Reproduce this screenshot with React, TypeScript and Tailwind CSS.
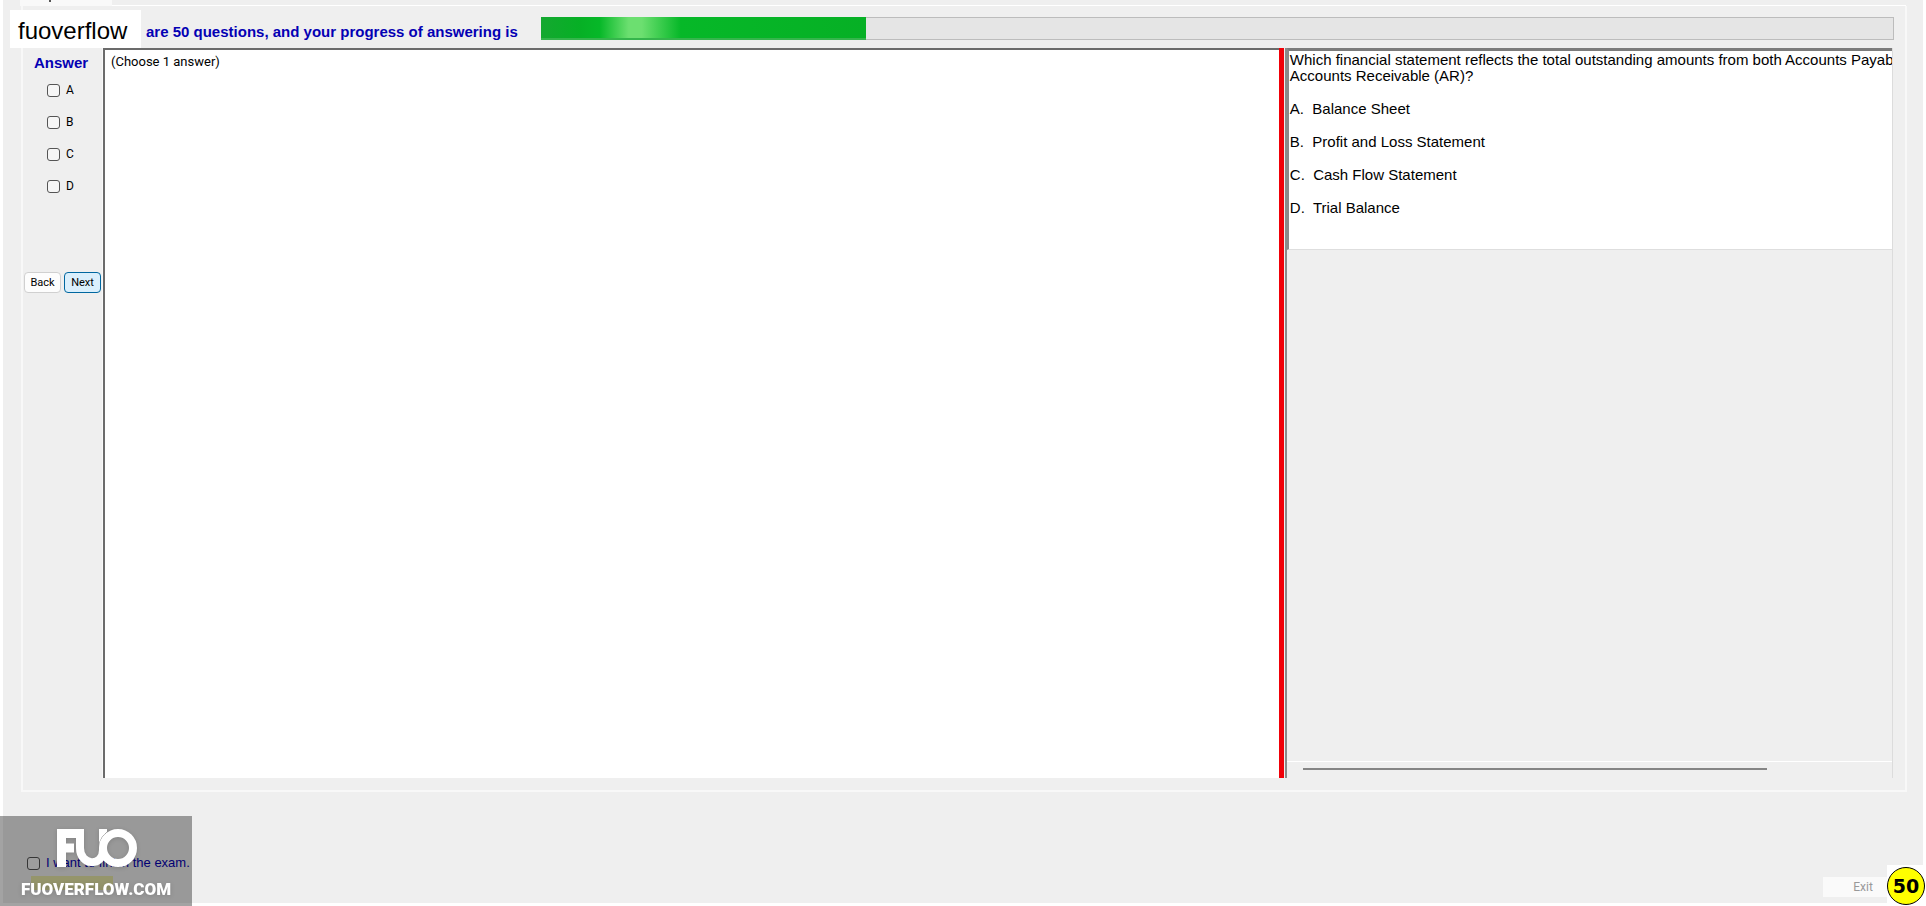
const answers = ['A', 'B', 'C', 'D'];

const choices = [
    { key: 'A', text: 'A.  Balance Sheet' },
    { key: 'B', text: 'B.  Profit and Loss Statement' },
    { key: 'C', text: 'C.  Cash Flow Statement' },
    { key: 'D', text: 'D.  Trial Balance' },
];

const checkboxClass = 'h-[13px] w-[13px] shrink-0 appearance-none rounded-[3px] border border-[#555] bg-[#f6f6f6] checked:bg-[#0067c0]';

const Watermark = () => (
    <div className="pointer-events-none absolute bottom-0 left-0 flex h-[90px] w-48 flex-col items-center bg-black/36 pt-3">
        <svg className="h-10 w-[84px] drop-shadow-sm" viewBox="0 0 84 40" fill="none" stroke="white" aria-hidden="true">
            <path d="M7.500 39V5.500H22M7 20H20" strokeWidth="9" />
            <path d="M26 1V20C26 38 49 39 49 22V1" strokeWidth="8" />
            <path d="M45 20A19.500 19.500 0 0 1 58 1.500" stroke="#8a8a8a" strokeWidth="1" />
            <circle cx="64" cy="20" r="15" strokeWidth="8" />
        </svg>
        <span className="mt-[11px] text-[17px] font-black leading-5 text-white drop-shadow-sm">FUOVERFLOW.COM</span>
    </div>
);

const App = () => {
    return (
        <div className="relative overflow-hidden font-['Roboto','Liberation_Sans',sans-serif] text-black">
            <div className="flex min-h-screen flex-col border-x-[3px] border-b-[3px] border-white bg-[#efefef]">

                {/* Tab strip */}
                <div className="flex h-[6px]">
                    <div className="ml-[17px] w-[92px] bg-[#f9f9f9] pl-[29px]">
                        <div className="h-[2px] w-[2px] bg-[#555]" />
                    </div>
                    <div className="mr-[17px] flex-1 border-b border-white" />
                </div>

                {/* Tab page */}
                <div className="ml-[18px] mr-4 flex flex-1 flex-col border-x-2 border-b-2 border-[#f8f8f8] pb-3">

                    {/* Progress header */}
                    <div className="flex h-[42px] shrink-0 items-start pl-[123px] pr-[11px] pt-[11px]">
                        <label id="progress-label" className="w-[395px] shrink-0 pt-[5px] font-['Liberation_Sans',sans-serif] text-[15px] font-bold leading-5 text-[#0400b4]">
                            are 50 questions, and your progress of answering is
                        </label>
                        <div
                            role="progressbar"
                            aria-labelledby="progress-label"
                            aria-valuenow={24}
                            className="h-[23px] flex-1 bg-[#e5e5e5] shadow-[inset_0_0_0_1px_#bcbcbc]"
                        >
                            <div className="h-full w-[24%] border-b-2 border-[#35b54c] bg-[linear-gradient(to_right,#14a830,#06b025_12%,#06b828_18%,#6cdf70_27%,#6cdf70_31%,#06b828_43%,#06b025)]" />
                        </div>
                    </div>

                    <div className="flex flex-1">
                        {/* Answer column */}
                        <aside className="flex w-20 shrink-0 flex-col border-r border-[#f8f8f8] pl-px">
                            <h2 className="mt-[5px] pl-[10px] font-['Liberation_Sans',sans-serif] text-[15px] font-bold leading-5 text-[#0400b4]">Answer</h2>
                            <div className="ml-[23px] mt-px flex flex-col">
                                {answers.map((letter) => (
                                    <label key={letter} className="flex h-8 items-center gap-[6px] text-xs">
                                        <input type="checkbox" name="answer" value={letter} className={checkboxClass} />
                                        {letter}
                                    </label>
                                ))}
                            </div>
                            <div className="mt-[70px] flex gap-[3px] text-[11px]">
                                <button className="h-[21px] w-[37px] rounded-[4px] border border-[#d0d0d0] bg-[#fdfdfd] pt-px">Back</button>
                                <button className="h-[21px] w-[37px] rounded-[4px] border border-[#0067a0] bg-[#daeffc] pt-px">Next</button>
                            </div>
                        </aside>

                        {/* Answer sheet */}
                        <main className="min-w-0 flex-[1171] border-l-2 border-t-2 border-[#6b6b6b] bg-white px-[6px] pt-[3px] text-[13px] leading-[18px]">
                            (Choose 1 answer)
                        </main>

                        {/* Question side, behind the splitter */}
                        <section className="mr-3 flex min-w-0 flex-[618] border-r border-[#dcdcdc]">
                            <div className="w-[5px] shrink-0 bg-[#f00008]" />
                            <div className="ml-px flex min-w-0 flex-1 flex-col border-l-2 border-[#8a8a8a]">
                                <div className="h-[202px] overflow-hidden border-b border-l-2 border-t-[3px] border-b-[#dedede] border-l-[#8a8a8a] border-t-[#7c7c7c] bg-white pl-px pt-px font-['Liberation_Sans',sans-serif] text-[15px] leading-4">
                                    <p className="whitespace-pre">
                                        {'Which financial statement reflects the total outstanding amounts from both Accounts Payable\nAccounts Receivable (AR)?'}
                                    </p>
                                    <ul className="mt-[17px] flex flex-col gap-[17px]">
                                        {choices.map((choice) => (
                                            <li key={choice.key} className="whitespace-pre">{choice.text}</li>
                                        ))}
                                    </ul>
                                </div>
                                <div className="mt-auto h-[17px] border-t border-white px-4 pt-[6px]">
                                    <div className="h-[2px] w-[81%] bg-[#858585]" />
                                </div>
                            </div>
                        </section>
                    </div>
                </div>

                {/* Footer */}
                <footer className="flex h-[111px] shrink-0 items-end justify-between pl-6">
                    <div className="pb-[13px]">
                        <label className="flex items-center gap-[6px] font-['Liberation_Sans',sans-serif] text-[13px] leading-5 text-[#0400b4]">
                            <input type="checkbox" name="finish" className={checkboxClass} />
                            I want to finish the exam.
                        </label>
                        <div className="ml-1 mt-[3px] h-[14px] w-[82px] bg-[#eaeaa8]" />
                    </div>
                    <div className="flex items-end">
                        <button disabled className="mb-[6px] h-5 w-16 bg-[#fafafa] pl-4 text-xs text-[#999]">Exit</button>
                        <div className="h-[38px] w-9 bg-white" />
                    </div>
                </footer>
            </div>

            {/* Overlays */}
            <div className="absolute left-[10px] top-[10px] flex h-[38px] w-[131px] items-center bg-white pl-2 pt-1 font-['Liberation_Sans',sans-serif] text-2xl leading-8">
                fuoverflow
            </div>
            <div className="absolute bottom-px right-px flex h-[38px] w-[38px] items-center justify-center rounded-full border border-black bg-[#ffff00] font-['DejaVu_Sans',sans-serif] text-[19px] font-bold">
                50
            </div>
            <Watermark />
        </div>
    );
};

export default App;
